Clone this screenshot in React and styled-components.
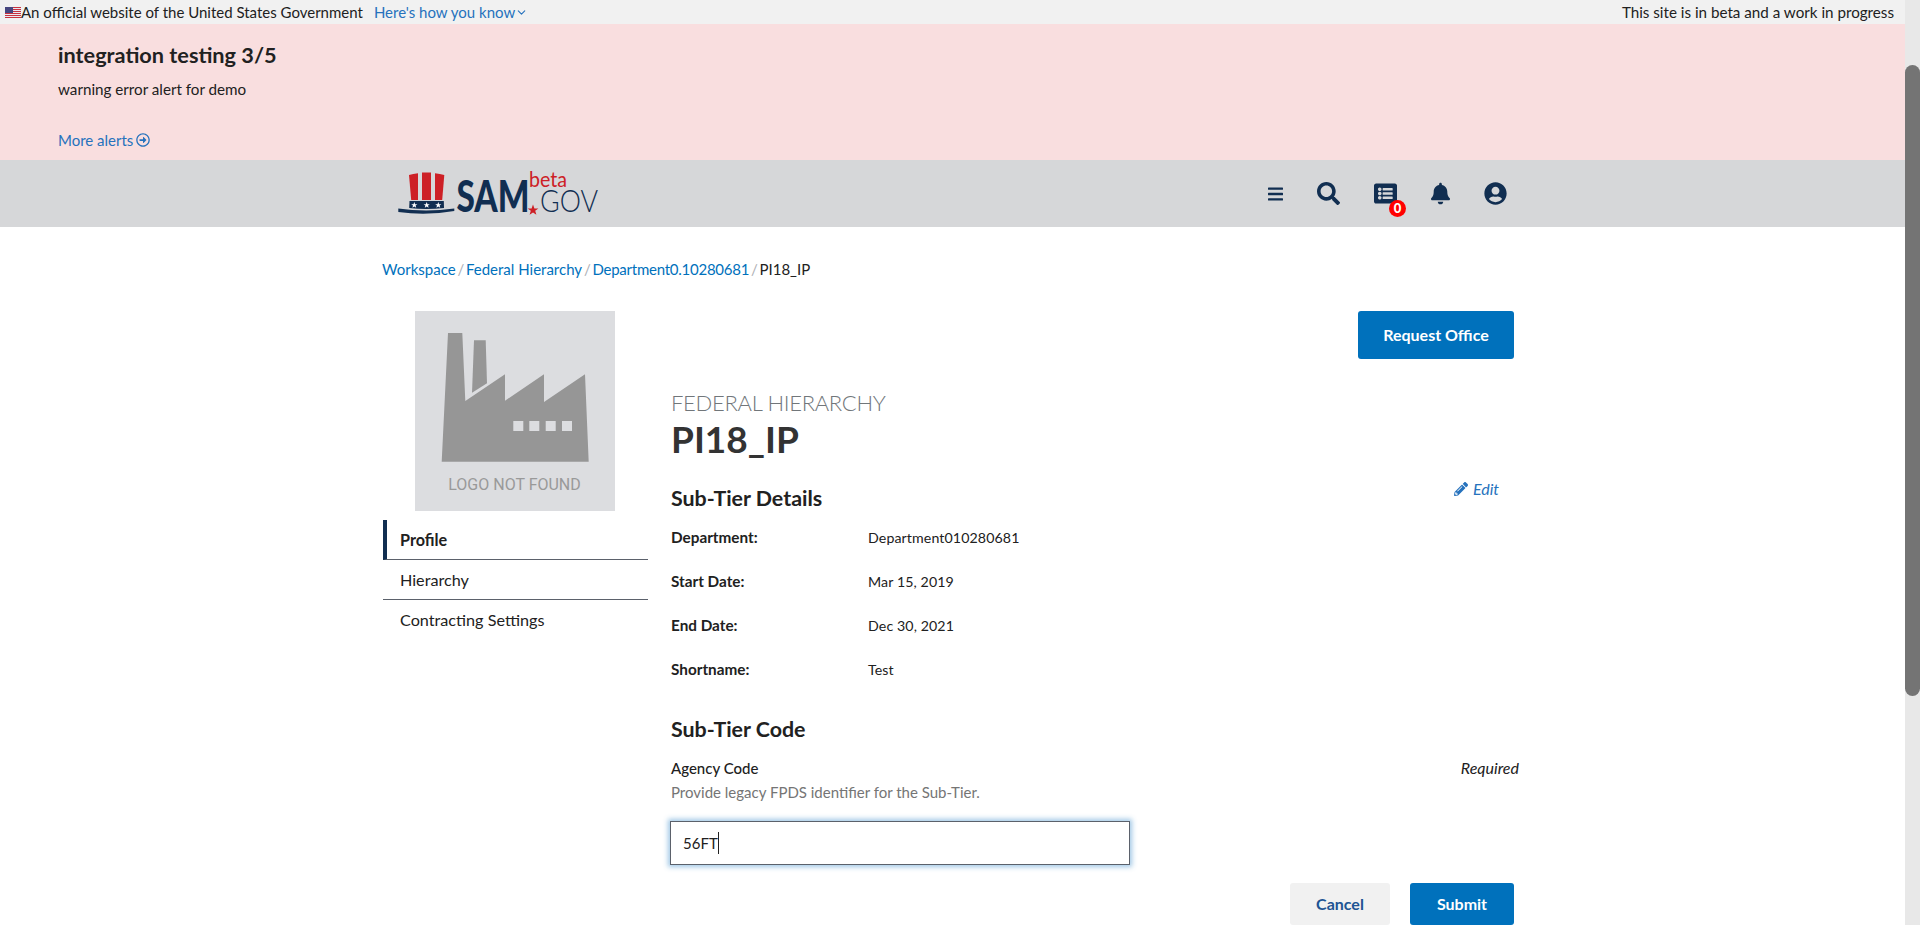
import React from "react";
import styled, { createGlobalStyle } from "styled-components";
import {
  FaBars,
  FaSearch,
  FaListAlt,
  FaBell,
  FaUserCircle,
  FaPencilAlt,
  FaRegArrowAltCircleRight,
} from "react-icons/fa";
import { LuChevronDown } from "react-icons/lu";

const GlobalStyle = createGlobalStyle`
  html, body {
    margin: 0;
    height: 100%;
    overflow: hidden;
    background: #fff;
    color: #212121;
    font-family: Lato, "Noto Sans", "Liberation Sans", sans-serif;
    font-size: 15px;
  }
`;

const Shell = styled.div`
  display: flex;
  height: 925px;
  overflow: hidden;
`;

const Page = styled.div`
  flex: 1;
  min-width: 0;
`;

const ScrollRail = styled.div`
  width: 15px;
  background: #e8e8e8;
  padding-top: 65px;
  box-sizing: border-box;
`;

const ScrollThumb = styled.div`
  height: 631px;
  background: #747474;
  border-radius: 8px;
`;

const GovBanner = styled.div`
  height: 24px;
  background: #f1f1f1;
  display: flex;
  align-items: center;
  justify-content: space-between;
  padding: 0 11px 0 5px;
  font-size: 15px;
`;

const BannerLeft = styled.div`
  display: flex;
  align-items: center;
`;

const BannerNote = styled.span`
  font-size: 15.2px;
`;

const HowLink = styled.a`
  display: flex;
  align-items: center;
  margin-left: 11px;
  color: #2672bd;
`;

const Alert = styled.div`
  height: 136px;
  box-sizing: border-box;
  background: #f9dedf;
  padding: 19px 58px 0;
`;

const AlertTitle = styled.div`
  font-size: 21.7px;
  font-weight: 700;
  line-height: 24px;
`;

const AlertText = styled.div`
  margin-top: 12px;
  font-size: 15.2px;
  line-height: 20px;
`;

const MoreLink = styled.a`
  display: flex;
  align-items: center;
  gap: 3px;
  margin-top: 31px;
  color: #2672bd;
  font-size: 15px;
  line-height: 20px;
`;

const Header = styled.header`
  height: 67px;
  background: #d6d7d9;
  display: flex;
  align-items: center;
  padding: 0 398px;
  justify-content: space-between;
  color: #112e51;
`;

const IconRow = styled.nav`
  display: flex;
  align-items: center;
`;

const IconSlot = styled.span`
  position: relative;
  display: flex;
  width: ${(p) => p.$w}px;
  margin-right: ${(p) => p.$mr || 0}px;
  justify-content: center;
  font-size: ${(p) => p.$size}px;
`;

const Badge = styled.span`
  position: absolute;
  right: -9px;
  bottom: -12px;
  width: 17px;
  height: 17px;
  border-radius: 50%;
  background: #f00;
  color: #fff;
  font-size: 13px;
  font-weight: 900;
  line-height: 17px;
  text-align: center;
`;

const Container = styled.div`
  width: 1141px;
  margin: 0 auto;
`;

const Crumbs = styled.div`
  height: 84px;
  padding-top: 31px;
  box-sizing: border-box;
  font-size: 15px;
  line-height: 22px;
  color: #212121;
`;

const CrumbLink = styled.a`
  color: #0071bc;
  letter-spacing: ${(p) => p.$tight || 0}px;
`;

const Slash = styled.span`
  color: #aeb0b5;
  margin: 0 1.8px;
`;

const Columns = styled.div`
  display: flex;
  gap: 23px;
  padding-left: 1px;
`;

const Side = styled.aside`
  width: 265px;
  flex: none;
`;

const LogoBox = styled.div`
  width: 200px;
  height: 200px;
  margin: 0 0 9px 32px;
  background: #dcdde0;
`;

const NavItem = styled.div`
  height: 40px;
  box-sizing: border-box;
  display: flex;
  align-items: center;
  padding-left: ${(p) => (p.$active ? 13 : 17)}px;
  border-left: ${(p) => (p.$active ? "4px solid #112e51" : "none")};
  border-bottom: 1px solid ${(p) => (p.$last ? "transparent" : "#5b616b")};
  font-weight: ${(p) => (p.$active ? 700 : 400)};
  font-size: 16.2px;
`;

const Main = styled.main`
  flex: 1;
  min-width: 0;
`;

const TopActions = styled.div`
  display: flex;
  justify-content: flex-end;
  padding-right: 9px;
`;

const Button = styled.button`
  height: ${(p) => p.$h}px;
  width: ${(p) => p.$w}px;
  padding: 0 0 2px;
  border: none;
  border-radius: 3px;
  background: ${(p) => (p.$plain ? "#f1f1f1" : "#0071bc")};
  color: ${(p) => (p.$plain ? "#205493" : "#fff")};
  font-family: inherit;
  font-size: 16px;
  font-weight: 700;
`;

const Eyebrow = styled.div`
  margin-top: 31px;
  font-size: 22px;
  font-weight: 300;
  line-height: 26px;
  color: #71767a;
  letter-spacing: -0.3px;
`;

const Title = styled.h1`
  margin: 0;
  font-size: 37px;
  font-weight: 700;
  line-height: 46px;
  color: #333;
`;

const SectionHead = styled.div`
  display: flex;
  justify-content: space-between;
  align-items: flex-start;
  margin-top: ${(p) => p.$mt}px;
  padding-right: 24px;
`;

const SectionTitle = styled.h2`
  margin: 0;
  font-size: 21.4px;
  font-weight: 700;
  line-height: 28px;
`;

const EditLink = styled.a`
  display: flex;
  align-items: center;
  gap: 5px;
  margin-top: -6px;
  color: #2672bd;
  font-size: 16px;
  font-style: italic;
  line-height: 22px;
`;

const Details = styled.dl`
  display: grid;
  grid-template-columns: 197px 1fr;
  grid-auto-rows: 44px;
  margin: 3px 0 0;
  align-items: center;
`;

const Term = styled.dt`
  font-size: 15.3px;
  font-weight: 700;
`;

const Value = styled.dd`
  margin: 0;
  font-size: 14.2px;
  letter-spacing: 0.1px;
`;

const FieldRow = styled.div`
  display: flex;
  justify-content: space-between;
  margin-top: 14px;
  padding-right: 4px;
  font-size: 15px;
  line-height: 22px;
`;

const FieldLabel = styled.label`
  font-weight: 500;
`;

const Required = styled.span`
  font-size: 16px;
  font-style: italic;
`;

const Hint = styled.div`
  font-size: 15px;
  line-height: 22px;
  margin-top: 2px;
  color: #757575;
`;

const InputBox = styled.div`
  width: 460px;
  height: 44px;
  box-sizing: border-box;
  margin: 18px 0 0 -1px;
  display: flex;
  align-items: center;
  padding-left: 12px;
  border: 1px solid #5b616b;
  box-shadow: 0 0 5px 2px rgba(46, 133, 200, 0.45);
  font-size: 15px;
`;

const Caret = styled.span`
  width: 1px;
  height: 22px;
  background: #212121;
`;

const FormActions = styled.div`
  display: flex;
  justify-content: flex-end;
  gap: 20px;
  margin-top: 18px;
  padding-right: 9px;
`;

const UsFlag = () => (
  <svg width="16" height="11" viewBox="0 0 16 11">
    <rect width="16" height="11" fill="#e8e8f0" />
    <rect y="0" width="16" height="1" fill="#c8313e" />
    <rect y="2" width="16" height="1" fill="#c8313e" />
    <rect y="4" width="16" height="1" fill="#c8313e" />
    <rect y="6" width="16" height="1" fill="#c8313e" />
    <rect y="8" width="16" height="1" fill="#c8313e" />
    <rect y="10" width="16" height="1" fill="#c8313e" />
    <rect width="8" height="6" fill="#46467f" />
  </svg>
);

const SamLogo = () => (
  <svg width="204" height="67" viewBox="0 -12 204 67" overflow="visible">
    <path d="M11 3 Q15 1.8 20 1.2 V28 H13.2 Z" fill="#cd2026" />
    <path d="M24 .5 H33 V28 H24 Z" fill="#cd2026" />
    <path d="M37 1.2 Q42 1.8 46.3 3 L44.2 28 H37 Z" fill="#cd2026" />
    <path d="M11.5 29 H45.8 L46 36 Q28 38 11.2 36 Z" fill="#112e51" />
    <path d="M.3 36.5 Q28 40.5 56.3 36.5 V39 Q28 44 .3 40 Z" fill="#112e51" />
    <polygon points="16.3,30 17.1,32.2 19.4,32.2 17.6,33.6 18.2,35.8 16.3,34.5 14.4,35.8 15,33.6 13.2,32.2 15.5,32.2" fill="#fff" />
    <polygon points="28.7,30 29.5,32.2 31.8,32.2 30,33.6 30.6,35.8 28.7,34.5 26.8,35.8 27.4,33.6 25.6,32.2 27.9,32.2" fill="#fff" />
    <polygon points="40.3,30 41.1,32.2 43.4,32.2 41.6,33.6 42.2,35.8 40.3,34.5 38.4,35.8 39,33.6 37.2,32.2 39.5,32.2" fill="#fff" />
    <text x="58.5" y="40" fontFamily="Lato, sans-serif" fontWeight="900" fontSize="43" fill="#112e51" textLength="73" lengthAdjust="spacingAndGlyphs">SAM</text>
    <text x="142" y="40" fontFamily="Lato, sans-serif" fontWeight="300" fontSize="32" fill="#112e51" textLength="58" lengthAdjust="spacingAndGlyphs">GOV</text>
    <text x="131" y="15" fontFamily="Lato, sans-serif" fontWeight="400" fontSize="21" fill="#cd2026" textLength="38" lengthAdjust="spacingAndGlyphs">beta</text>
    <polygon points="135,32.5 136.4,36.4 140.4,36.4 137.2,38.8 138.4,42.8 135,40.4 131.6,42.8 132.8,38.8 129.6,36.4 133.6,36.4" fill="#cd2026" />
  </svg>
);

const FactoryLogo = () => (
  <svg width="200" height="200" viewBox="0 0 200 200">
    <path d="M33 22 H47.3 L50.3 90 L90 63.3 V89.7 L129 63.3 V91 L170 63.3 L173.7 150.7 H26.7 Z" fill="#969696" />
    <path d="M59 29.3 H70.7 L72 72.3 L57 81.7 Z" fill="#969696" />
    <rect x="98.3" y="110" width="10" height="10" fill="#dcdde0" />
    <rect x="114.3" y="110" width="10" height="10" fill="#dcdde0" />
    <rect x="130.7" y="110" width="10" height="10" fill="#dcdde0" />
    <rect x="147" y="110" width="10" height="10" fill="#dcdde0" />
    <text x="99.5" y="179" textAnchor="middle" fontFamily="Roboto, sans-serif" fontSize="16" fill="#999">LOGO NOT FOUND</text>
  </svg>
);

const details = [
  ["Department:", "Department010280681"],
  ["Start Date:", "Mar 15, 2019"],
  ["End Date:", "Dec 30, 2021"],
  ["Shortname:", "Test"],
];

const App = () => {
  return (
    <Shell>
      <GlobalStyle />
      <Page>
        <GovBanner>
          <BannerLeft>
            <UsFlag />
            <span>An official website of the United States Government</span>
            <HowLink>
              Here's how you know
              <LuChevronDown size={13} />
            </HowLink>
          </BannerLeft>
          <BannerNote>This site is in beta and a work in progress</BannerNote>
        </GovBanner>
        <Alert>
          <AlertTitle>integration testing 3/5</AlertTitle>
          <AlertText>warning error alert for demo</AlertText>
          <MoreLink>
            More alerts
            <FaRegArrowAltCircleRight size={14} />
          </MoreLink>
        </Alert>
        <Header>
          <SamLogo />
          <IconRow>
            <IconSlot $w={15} $size={18} $mr={34}><FaBars /></IconSlot>
            <IconSlot $w={23} $size={23} $mr={34}><FaSearch /></IconSlot>
            <IconSlot $w={23} $size={23} $mr={34}>
              <FaListAlt />
              <Badge>0</Badge>
            </IconSlot>
            <IconSlot $w={19} $size={23} $mr={34}><FaBell /></IconSlot>
            <IconSlot $w={23} $size={23}><FaUserCircle /></IconSlot>
          </IconRow>
        </Header>
        <Container>
          <Crumbs>
            <CrumbLink>Workspace</CrumbLink>
            <Slash>/</Slash>
            <CrumbLink>Federal Hierarchy</CrumbLink>
            <Slash>/</Slash>
            <CrumbLink $tight={-0.25}>Department0.10280681</CrumbLink>
            <Slash>/</Slash>
            PI18_IP
          </Crumbs>
          <Columns>
            <Side>
              <LogoBox><FactoryLogo /></LogoBox>
              <NavItem $active>Profile</NavItem>
              <NavItem>Hierarchy</NavItem>
              <NavItem $last>Contracting Settings</NavItem>
            </Side>
            <Main>
              <TopActions>
                <Button $w={156} $h={48}>Request Office</Button>
              </TopActions>
              <Eyebrow>FEDERAL HIERARCHY</Eyebrow>
              <Title>PI18_IP</Title>
              <SectionHead $mt={22}>
                <SectionTitle>Sub-Tier Details</SectionTitle>
                <EditLink><FaPencilAlt size={14} />Edit</EditLink>
              </SectionHead>
              <Details>
                {details.map(([term, value]) => (
                  <React.Fragment key={term}>
                    <Term>{term}</Term>
                    <Value>{value}</Value>
                  </React.Fragment>
                ))}
              </Details>
              <SectionHead $mt={24}>
                <SectionTitle>Sub-Tier Code</SectionTitle>
              </SectionHead>
              <FieldRow>
                <FieldLabel>Agency Code</FieldLabel>
                <Required>Required</Required>
              </FieldRow>
              <Hint>Provide legacy FPDS identifier for the Sub-Tier.</Hint>
              <InputBox>56FT<Caret /></InputBox>
              <FormActions>
                <Button $plain $w={100} $h={42}>Cancel</Button>
                <Button $w={104} $h={42}>Submit</Button>
              </FormActions>
            </Main>
          </Columns>
        </Container>
      </Page>
      <ScrollRail>
        <ScrollThumb />
      </ScrollRail>
    </Shell>
  );
};

export default App;
